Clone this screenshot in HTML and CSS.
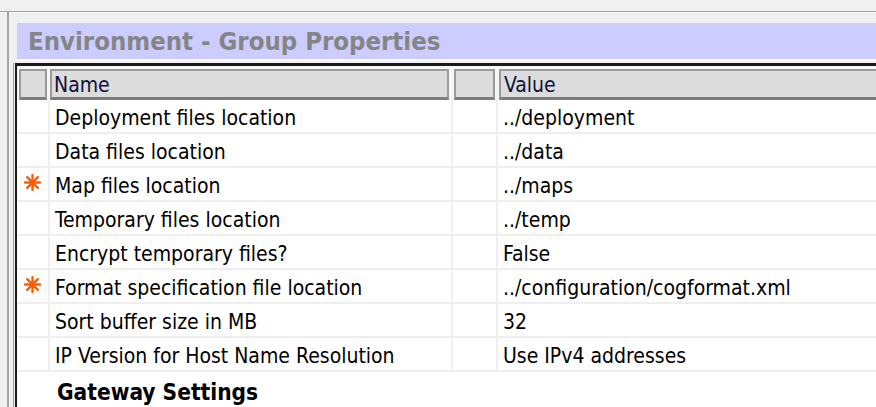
FILE: index.html
```html
<!DOCTYPE html>
<html>
<head>
<meta charset="utf-8">
<link rel="stylesheet" href="styles.css">
</head>
<body>
<div class="topbar"></div>
<div class="frame">
  <div class="title">Environment - Group Properties</div>
  <div class="table">
    <div class="header">
      <div class="hcell h-star"></div>
      <div class="hcell h-name">Name</div>
      <div class="hcell h-mid"></div>
      <div class="hcell h-value">Value</div>
    </div>
    <div class="row"><div class="c star"></div><div class="c name">Deployment files location</div><div class="c mid"></div><div class="c value">../deployment</div></div>
    <div class="row"><div class="c star"></div><div class="c name">Data files location</div><div class="c mid"></div><div class="c value">../data</div></div>
    <div class="row"><div class="c star"><svg class="ast" viewBox="0 0 16 16" width="17" height="17"><g stroke="#ff5a00" stroke-width="2.2" stroke-linecap="round"><line x1="8" y1="1" x2="8" y2="15"/><line x1="1" y1="8" x2="15" y2="8"/><line x1="3" y1="3" x2="13" y2="13"/><line x1="13" y1="3" x2="3" y2="13"/></g></svg></div><div class="c name">Map files location</div><div class="c mid"></div><div class="c value">../maps</div></div>
    <div class="row"><div class="c star"></div><div class="c name">Temporary files location</div><div class="c mid"></div><div class="c value">../temp</div></div>
    <div class="row"><div class="c star"></div><div class="c name">Encrypt temporary files?</div><div class="c mid"></div><div class="c value">False</div></div>
    <div class="row"><div class="c star"><svg class="ast" viewBox="0 0 16 16" width="17" height="17"><g stroke="#ff5a00" stroke-width="2.2" stroke-linecap="round"><line x1="8" y1="1" x2="8" y2="15"/><line x1="1" y1="8" x2="15" y2="8"/><line x1="3" y1="3" x2="13" y2="13"/><line x1="13" y1="3" x2="3" y2="13"/></g></svg></div><div class="c name">Format specification file location</div><div class="c mid"></div><div class="c value">../configuration/cogformat.xml</div></div>
    <div class="row"><div class="c star"></div><div class="c name">Sort buffer size in MB</div><div class="c mid"></div><div class="c value">32</div></div>
    <div class="row"><div class="c star"></div><div class="c name">IP Version for Host Name Resolution</div><div class="c mid"></div><div class="c value">Use IPv4 addresses</div></div>
    <div class="category">Gateway Settings</div>
  </div>
</div>
</body>
</html>
```
FILE: styles.css
```css
html, body {
  margin: 0;
  padding: 0;
}
body {
  width: 876px;
  height: 407px;
  overflow: hidden;
  background: #f0f0f0;
  font-family: "DejaVu Sans Condensed", "DejaVu Sans", sans-serif;
  font-stretch: condensed;
}
.topbar {
  height: 11px;
  border-bottom: 1px solid #a0a0a0;
  box-shadow: 0 1px 0 #fafafa;
}
.frame {
  margin-left: 7px;
  border-left: 2px solid #a4a4a4;
  padding: 11px 0 0 6px;
  height: 395px;
  box-sizing: border-box;
  display: flex;
  flex-direction: column;
}
.title {
  margin-left: 2px;
  height: 36px;
  flex: none;
  background: #ccccff;
  color: #858585;
  font-weight: bold;
  font-size: 25.5px;
  line-height: 37px;
  padding-left: 11px;
  box-shadow: 0 2px 0 #fbfbfb;
  margin-bottom: 4px;
}
.table {
  flex: 1;
  min-height: 0;
  overflow: hidden;
  background: #fff;
  border-top: 3px solid #1a1a1a;
  border-left: 2px solid #1a1a1a;
  box-shadow: -1px 0 0 #f0f0f0, -2px 0 0 #9a9a9a;
}
.header {
  display: flex;
  height: 34px;
  padding: 3px 0 0 2px;
  box-sizing: border-box;
  background: #f6f6f6;
}
.hcell {
  box-sizing: border-box;
  height: 31px;
  background: #dcdcdc;
  border: 2px solid #9a9a9a;
  border-bottom: 3px solid #7c7c7c;
  color: #10103a;
  font-size: 21px;
  line-height: 28px;
}
.h-star { width: 28px; }
.h-name { width: 399px; margin-left: 3px; padding-left: 2px; }
.h-mid { width: 41px; margin-left: 5px; }
.h-value { flex: 1; margin-left: 4px; padding-left: 3px; border-right: none; }
.row {
  display: grid;
  grid-template-columns: 33px 403px 45px 1fr;
  height: 34px;
  border-bottom: 2px solid #efefef;
  box-sizing: border-box;
}
.c {
  border-right: 2px solid #efefef;
  font-size: 21px;
  line-height: 28px;
  padding-top: 4px;
  color: #000;
  white-space: nowrap;
  overflow: hidden;
}
.c.value { border-right: none; padding-left: 5px; }
.c.name { padding-left: 5px; }
.star {
  display: flex;
  justify-content: center;
  align-items: flex-start;
  padding-top: 0;
}
.ast {
  margin-top: 6px;
}
.category {
  font-weight: bold;
  font-size: 22.5px;
  line-height: 40px;
  padding-left: 40px;
  color: #000;
}
```
